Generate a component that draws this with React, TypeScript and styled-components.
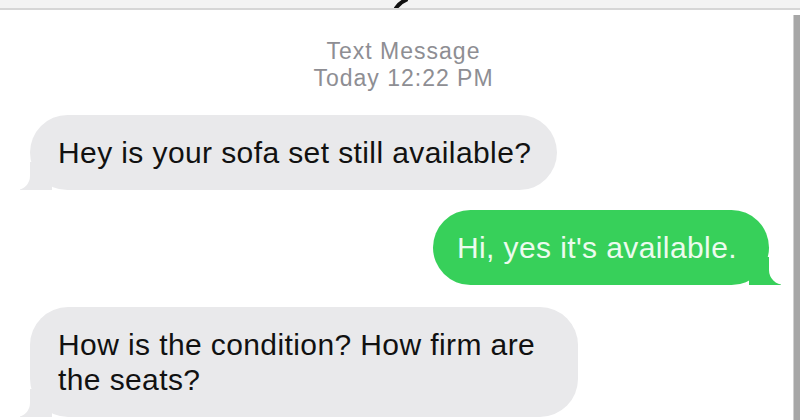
import styled, { createGlobalStyle } from 'styled-components'

const GlobalStyle = createGlobalStyle`
    html, body {
        margin: 0;
        padding: 0;
        background: #ffffff;
    }
    body {
        font-family: "Liberation Sans", Arial, sans-serif;
        width: 800px;
        height: 420px;
        overflow: hidden;
    }
`

const GRAY = '#e9e9eb'
const GREEN = '#37d05a'

const Page = styled.div`
    width: 800px;
    height: 420px;
    display: flex;
    flex-direction: column;
    overflow: hidden;
`

const TopBar = styled.div`
    height: 8px;
    flex-shrink: 0;
    background: #f3f3f3;
    border-bottom: 2px solid #d6d6d6;
    display: flex;
    justify-content: center;
    overflow: hidden;
`

const Body = styled.div`
    flex: 1;
    display: flex;
    min-height: 0;
`

const Thread = styled.div`
    flex: 1;
    display: flex;
    flex-direction: column;
    padding: 28px 24px 0 30px;
`

const ScrollThumb = styled.div`
    width: 6px;
    margin-top: 5px;
    background: #a7a7a7;
    border-left: 1px solid #d0d0d0;
`

const Stamp = styled.div`
    text-align: center;
    color: #8e8e93;
    font-size: 23px;
    line-height: 27px;
    letter-spacing: 1px;
    margin-bottom: 23px;
    padding-left: 8px;
`

const Bubble = styled.div<{ $mine?: boolean; $max?: number }>`
    position: relative;
    box-sizing: border-box;
    align-self: ${p => (p.$mine ? 'flex-end' : 'flex-start')};
    max-width: ${p => p.$max || 600}px;
    background: ${p => (p.$mine ? GREEN : GRAY)};
    color: ${p => (p.$mine ? '#ecfbee' : '#111111')};
    font-size: 30px;
    line-height: 35px;
    letter-spacing: 0.4px;
    padding: 20px ${p => (p.$mine ? '32px' : '26px')} 20px ${p => (p.$mine ? '24px' : '28px')};
    border-radius: 38px;
    margin-bottom: ${p => (p.$mine ? 22 : 20)}px;

    &::before {
        content: "";
        position: absolute;
        bottom: 0;
        ${p => (p.$mine ? 'right: -12px;' : 'left: -10px;')}
        width: 32px;
        height: 28px;
        background: ${p => (p.$mine ? GREEN : GRAY)};
    }

    &::after {
        content: "";
        position: absolute;
        bottom: 0;
        ${p => (p.$mine ? 'right: -24px;' : 'left: -22px;')}
        width: ${p => (p.$mine ? 24 : 22)}px;
        height: 32px;
        background: #ffffff;
        ${p => (p.$mine
            ? 'border-bottom-left-radius: 15px;'
            : 'border-bottom-right-radius: 14px;')}
    }
`

const Squiggle = () => (
    <svg width="24" height="8" viewBox="0 0 24 8">
        <path d="M8 8 C 10 5, 13 2, 18 0" stroke="#111" strokeWidth="4" fill="none" strokeLinecap="round" />
    </svg>
)

export default function App() {
    return (
        <Page>
            <GlobalStyle />
            <TopBar>
                <Squiggle />
            </TopBar>
            <Body>
                <Thread>
                    <Stamp>
                        Text Message
                        <br />
                        Today 12:22 PM
                    </Stamp>
                    <Bubble>Hey is your sofa set still available?</Bubble>
                    <Bubble $mine>Hi, yes it's available.</Bubble>
                    <Bubble $max={548}>How is the condition? How firm are the seats?</Bubble>
                </Thread>
                <ScrollThumb />
            </Body>
        </Page>
    )
}
